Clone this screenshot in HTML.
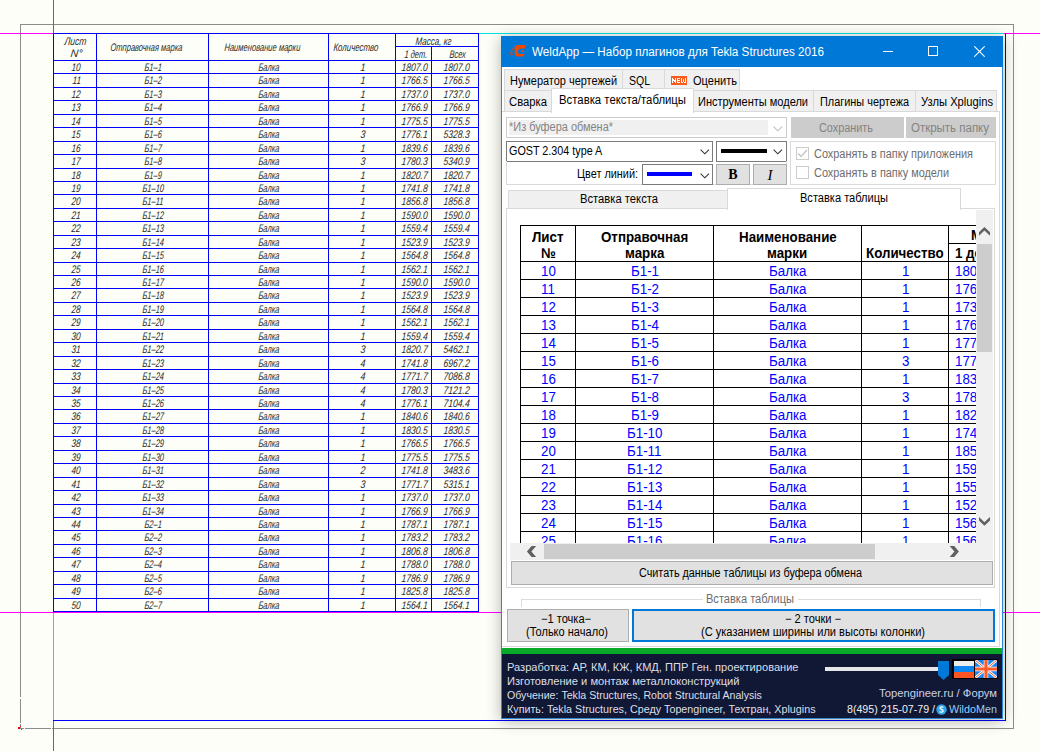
<!DOCTYPE html>
<html><head><meta charset="utf-8">
<style>
*{margin:0;padding:0;box-sizing:border-box}
html,body{width:1040px;height:751px;overflow:hidden;background:#fdfef7}
.a{position:absolute}
.g{position:absolute;line-height:11px;color:#2a2a2a;white-space:nowrap}
.w{position:absolute;line-height:15px;color:#000;white-space:nowrap}
.t{position:absolute;line-height:14px;color:#000;white-space:nowrap}
</style></head><body>
<div class="a" style="left:20px;top:24px;width:994px;height:1px;background:#8c8c8c;"></div>
<div class="a" style="left:20px;top:24px;width:1px;height:705px;background:#8c8c8c;"></div>
<div class="a" style="left:20px;top:728px;width:994px;height:1px;background:#8c8c8c;"></div>
<div class="a" style="left:1013px;top:24px;width:1px;height:705px;background:#8c8c8c;"></div>
<div class="a" style="left:53px;top:0px;width:1px;height:33px;background:#ff00ff;"></div>
<div class="a" style="left:0px;top:33px;width:53px;height:1px;background:#ff00ff;"></div>
<div class="a" style="left:0px;top:612px;width:53px;height:1px;background:#ff00ff;"></div>
<div class="a" style="left:479px;top:33px;width:562px;height:1px;background:#00e5e5;"></div>
<div class="a" style="left:1004px;top:33px;width:37px;height:1px;background:#ff00ff;"></div>
<div class="a" style="left:53px;top:612px;width:988px;height:1px;background:#ff00ff;"></div>
<div class="a" style="left:53px;top:613px;width:1px;height:107px;background:#00e5e5;"></div>
<div class="a" style="left:53px;top:721px;width:1px;height:31px;background:#ff00ff;"></div>
<div class="a" style="left:53px;top:720px;width:953px;height:1px;background:#0000ff;"></div>
<div class="a" style="left:1005px;top:33px;width:1px;height:688px;background:#0000ff;"></div>
<div class="a" style="left:20px;top:697px;width:1px;height:2px;background:#fdfef7;"></div>
<div class="a" style="left:20px;top:723px;width:1px;height:1px;background:#fdfef7;"></div>
<div class="a" style="left:24px;top:728px;width:1px;height:1px;background:#fdfef7;"></div>
<div class="a" style="left:51px;top:728px;width:1px;height:1px;background:#fdfef7;"></div>
<div class="a" style="left:18px;top:727px;width:2px;height:2px;background:#ff0000;"></div>
<div class="a" style="left:20px;top:726px;width:1px;height:1px;background:#ff0000;"></div>
<div class="a" style="left:21px;top:729px;width:1px;height:1px;background:#ff0000;"></div>
<div class="a" style="left:53px;top:33px;width:426px;height:1px;background:#0000ff;"></div>
<div class="a" style="left:395px;top:46px;width:84px;height:1px;background:#0000ff;"></div>
<div class="a" style="left:53px;top:60px;width:426px;height:1px;background:#0000ff;"></div>
<div class="a" style="left:53px;top:73px;width:426px;height:1px;background:#0000ff;"></div>
<div class="a" style="left:53px;top:87px;width:426px;height:1px;background:#0000ff;"></div>
<div class="a" style="left:53px;top:100px;width:426px;height:1px;background:#0000ff;"></div>
<div class="a" style="left:53px;top:114px;width:426px;height:1px;background:#0000ff;"></div>
<div class="a" style="left:53px;top:127px;width:426px;height:1px;background:#0000ff;"></div>
<div class="a" style="left:53px;top:141px;width:426px;height:1px;background:#0000ff;"></div>
<div class="a" style="left:53px;top:154px;width:426px;height:1px;background:#0000ff;"></div>
<div class="a" style="left:53px;top:168px;width:426px;height:1px;background:#0000ff;"></div>
<div class="a" style="left:53px;top:181px;width:426px;height:1px;background:#0000ff;"></div>
<div class="a" style="left:53px;top:194px;width:426px;height:1px;background:#0000ff;"></div>
<div class="a" style="left:53px;top:208px;width:426px;height:1px;background:#0000ff;"></div>
<div class="a" style="left:53px;top:221px;width:426px;height:1px;background:#0000ff;"></div>
<div class="a" style="left:53px;top:235px;width:426px;height:1px;background:#0000ff;"></div>
<div class="a" style="left:53px;top:248px;width:426px;height:1px;background:#0000ff;"></div>
<div class="a" style="left:53px;top:262px;width:426px;height:1px;background:#0000ff;"></div>
<div class="a" style="left:53px;top:275px;width:426px;height:1px;background:#0000ff;"></div>
<div class="a" style="left:53px;top:288px;width:426px;height:1px;background:#0000ff;"></div>
<div class="a" style="left:53px;top:302px;width:426px;height:1px;background:#0000ff;"></div>
<div class="a" style="left:53px;top:315px;width:426px;height:1px;background:#0000ff;"></div>
<div class="a" style="left:53px;top:329px;width:426px;height:1px;background:#0000ff;"></div>
<div class="a" style="left:53px;top:342px;width:426px;height:1px;background:#0000ff;"></div>
<div class="a" style="left:53px;top:356px;width:426px;height:1px;background:#0000ff;"></div>
<div class="a" style="left:53px;top:369px;width:426px;height:1px;background:#0000ff;"></div>
<div class="a" style="left:53px;top:383px;width:426px;height:1px;background:#0000ff;"></div>
<div class="a" style="left:53px;top:396px;width:426px;height:1px;background:#0000ff;"></div>
<div class="a" style="left:53px;top:409px;width:426px;height:1px;background:#0000ff;"></div>
<div class="a" style="left:53px;top:423px;width:426px;height:1px;background:#0000ff;"></div>
<div class="a" style="left:53px;top:436px;width:426px;height:1px;background:#0000ff;"></div>
<div class="a" style="left:53px;top:450px;width:426px;height:1px;background:#0000ff;"></div>
<div class="a" style="left:53px;top:463px;width:426px;height:1px;background:#0000ff;"></div>
<div class="a" style="left:53px;top:477px;width:426px;height:1px;background:#0000ff;"></div>
<div class="a" style="left:53px;top:490px;width:426px;height:1px;background:#0000ff;"></div>
<div class="a" style="left:53px;top:504px;width:426px;height:1px;background:#0000ff;"></div>
<div class="a" style="left:53px;top:517px;width:426px;height:1px;background:#0000ff;"></div>
<div class="a" style="left:53px;top:530px;width:426px;height:1px;background:#0000ff;"></div>
<div class="a" style="left:53px;top:544px;width:426px;height:1px;background:#0000ff;"></div>
<div class="a" style="left:53px;top:557px;width:426px;height:1px;background:#0000ff;"></div>
<div class="a" style="left:53px;top:571px;width:426px;height:1px;background:#0000ff;"></div>
<div class="a" style="left:53px;top:584px;width:426px;height:1px;background:#0000ff;"></div>
<div class="a" style="left:53px;top:598px;width:426px;height:1px;background:#0000ff;"></div>
<div class="a" style="left:53px;top:611px;width:426px;height:1px;background:#0000ff;"></div>
<div class="a" style="left:53px;top:33px;width:1px;height:579px;background:#0000ff;"></div>
<div class="a" style="left:96px;top:33px;width:1px;height:579px;background:#0000ff;"></div>
<div class="a" style="left:208px;top:33px;width:1px;height:579px;background:#0000ff;"></div>
<div class="a" style="left:328px;top:33px;width:1px;height:579px;background:#0000ff;"></div>
<div class="a" style="left:395px;top:33px;width:1px;height:579px;background:#0000ff;"></div>
<div class="a" style="left:431px;top:46px;width:1px;height:566px;background:#0000ff;"></div>
<div class="a" style="left:478px;top:33px;width:1px;height:579px;background:#0000ff;"></div>
<div class="g" style="left:64px;top:35px;font:italic 11px 'Liberation Sans';transform:scaleX(0.7768) skewX(-6deg);transform-origin:0 100%;">Лист</div>
<div class="g" style="left:70px;top:47px;font:italic 11px 'Liberation Sans';transform:scaleX(0.9722) skewX(-6deg);transform-origin:0 100%;">N°</div>
<div class="g" style="left:110px;top:41px;font:italic 11px 'Liberation Sans';transform:scaleX(0.6856) skewX(-6deg);transform-origin:0 100%;">Отправочная марка</div>
<div class="g" style="left:224px;top:41px;font:italic 11px 'Liberation Sans';transform:scaleX(0.6905) skewX(-6deg);transform-origin:0 100%;">Наименование марки</div>
<div class="g" style="left:333px;top:41px;font:italic 11px 'Liberation Sans';transform:scaleX(0.7183) skewX(-6deg);transform-origin:0 100%;">Количество</div>
<div class="g" style="left:415px;top:34.5px;font:italic 11px 'Liberation Sans';transform:scaleX(0.7309) skewX(-6deg);transform-origin:0 100%;">Масса, кг</div>
<div class="g" style="left:404.08px;top:47.5px;font:italic 11px 'Liberation Sans';transform:scaleX(0.6850) skewX(-6deg);transform-origin:0 100%;">1 дет.</div>
<div class="g" style="left:448.79px;top:47.5px;font:italic 11px 'Liberation Sans';transform:scaleX(0.6850) skewX(-6deg);transform-origin:0 100%;">Всех</div>
<div class="g" style="left:71.41px;top:61px;font:italic 11px 'Liberation Sans';transform:scaleX(0.7500) skewX(-6deg);transform-origin:0 100%;">10</div>
<div class="g" style="left:144.26px;top:61px;font:italic 11px 'Liberation Sans';transform:scaleX(0.6850) skewX(-6deg);transform-origin:0 100%;">Б1–1</div>
<div class="g" style="left:258.0px;top:61px;font:italic 11px 'Liberation Sans';transform:scaleX(0.6850) skewX(-6deg);transform-origin:0 100%;">Балка</div>
<div class="g" style="left:359.55px;top:61px;font:italic 11px 'Liberation Sans';transform:scaleX(0.8000) skewX(-6deg);transform-origin:0 100%;">1</div>
<div class="g" style="left:400.88px;top:61px;font:italic 11px 'Liberation Sans';transform:scaleX(0.7800) skewX(-6deg);transform-origin:0 100%;">1807.0</div>
<div class="g" style="left:443.18px;top:61px;font:italic 11px 'Liberation Sans';transform:scaleX(0.7800) skewX(-6deg);transform-origin:0 100%;">1807.0</div>
<div class="g" style="left:71.72px;top:74px;font:italic 11px 'Liberation Sans';transform:scaleX(0.7500) skewX(-6deg);transform-origin:0 100%;">11</div>
<div class="g" style="left:144.26px;top:74px;font:italic 11px 'Liberation Sans';transform:scaleX(0.6850) skewX(-6deg);transform-origin:0 100%;">Б1–2</div>
<div class="g" style="left:258.0px;top:74px;font:italic 11px 'Liberation Sans';transform:scaleX(0.6850) skewX(-6deg);transform-origin:0 100%;">Балка</div>
<div class="g" style="left:359.55px;top:74px;font:italic 11px 'Liberation Sans';transform:scaleX(0.8000) skewX(-6deg);transform-origin:0 100%;">1</div>
<div class="g" style="left:400.88px;top:74px;font:italic 11px 'Liberation Sans';transform:scaleX(0.7800) skewX(-6deg);transform-origin:0 100%;">1766.5</div>
<div class="g" style="left:443.18px;top:74px;font:italic 11px 'Liberation Sans';transform:scaleX(0.7800) skewX(-6deg);transform-origin:0 100%;">1766.5</div>
<div class="g" style="left:71.41px;top:88px;font:italic 11px 'Liberation Sans';transform:scaleX(0.7500) skewX(-6deg);transform-origin:0 100%;">12</div>
<div class="g" style="left:144.26px;top:88px;font:italic 11px 'Liberation Sans';transform:scaleX(0.6850) skewX(-6deg);transform-origin:0 100%;">Б1–3</div>
<div class="g" style="left:258.0px;top:88px;font:italic 11px 'Liberation Sans';transform:scaleX(0.6850) skewX(-6deg);transform-origin:0 100%;">Балка</div>
<div class="g" style="left:359.55px;top:88px;font:italic 11px 'Liberation Sans';transform:scaleX(0.8000) skewX(-6deg);transform-origin:0 100%;">1</div>
<div class="g" style="left:400.88px;top:88px;font:italic 11px 'Liberation Sans';transform:scaleX(0.7800) skewX(-6deg);transform-origin:0 100%;">1737.0</div>
<div class="g" style="left:443.18px;top:88px;font:italic 11px 'Liberation Sans';transform:scaleX(0.7800) skewX(-6deg);transform-origin:0 100%;">1737.0</div>
<div class="g" style="left:71.41px;top:101px;font:italic 11px 'Liberation Sans';transform:scaleX(0.7500) skewX(-6deg);transform-origin:0 100%;">13</div>
<div class="g" style="left:144.26px;top:101px;font:italic 11px 'Liberation Sans';transform:scaleX(0.6850) skewX(-6deg);transform-origin:0 100%;">Б1–4</div>
<div class="g" style="left:258.0px;top:101px;font:italic 11px 'Liberation Sans';transform:scaleX(0.6850) skewX(-6deg);transform-origin:0 100%;">Балка</div>
<div class="g" style="left:359.55px;top:101px;font:italic 11px 'Liberation Sans';transform:scaleX(0.8000) skewX(-6deg);transform-origin:0 100%;">1</div>
<div class="g" style="left:400.88px;top:101px;font:italic 11px 'Liberation Sans';transform:scaleX(0.7800) skewX(-6deg);transform-origin:0 100%;">1766.9</div>
<div class="g" style="left:443.18px;top:101px;font:italic 11px 'Liberation Sans';transform:scaleX(0.7800) skewX(-6deg);transform-origin:0 100%;">1766.9</div>
<div class="g" style="left:71.41px;top:115px;font:italic 11px 'Liberation Sans';transform:scaleX(0.7500) skewX(-6deg);transform-origin:0 100%;">14</div>
<div class="g" style="left:144.26px;top:115px;font:italic 11px 'Liberation Sans';transform:scaleX(0.6850) skewX(-6deg);transform-origin:0 100%;">Б1–5</div>
<div class="g" style="left:258.0px;top:115px;font:italic 11px 'Liberation Sans';transform:scaleX(0.6850) skewX(-6deg);transform-origin:0 100%;">Балка</div>
<div class="g" style="left:359.55px;top:115px;font:italic 11px 'Liberation Sans';transform:scaleX(0.8000) skewX(-6deg);transform-origin:0 100%;">1</div>
<div class="g" style="left:400.88px;top:115px;font:italic 11px 'Liberation Sans';transform:scaleX(0.7800) skewX(-6deg);transform-origin:0 100%;">1775.5</div>
<div class="g" style="left:443.18px;top:115px;font:italic 11px 'Liberation Sans';transform:scaleX(0.7800) skewX(-6deg);transform-origin:0 100%;">1775.5</div>
<div class="g" style="left:71.41px;top:128px;font:italic 11px 'Liberation Sans';transform:scaleX(0.7500) skewX(-6deg);transform-origin:0 100%;">15</div>
<div class="g" style="left:144.26px;top:128px;font:italic 11px 'Liberation Sans';transform:scaleX(0.6850) skewX(-6deg);transform-origin:0 100%;">Б1–6</div>
<div class="g" style="left:258.0px;top:128px;font:italic 11px 'Liberation Sans';transform:scaleX(0.6850) skewX(-6deg);transform-origin:0 100%;">Балка</div>
<div class="g" style="left:359.55px;top:128px;font:italic 11px 'Liberation Sans';transform:scaleX(0.8000) skewX(-6deg);transform-origin:0 100%;">3</div>
<div class="g" style="left:400.88px;top:128px;font:italic 11px 'Liberation Sans';transform:scaleX(0.7800) skewX(-6deg);transform-origin:0 100%;">1776.1</div>
<div class="g" style="left:443.18px;top:128px;font:italic 11px 'Liberation Sans';transform:scaleX(0.7800) skewX(-6deg);transform-origin:0 100%;">5328.3</div>
<div class="g" style="left:71.41px;top:142px;font:italic 11px 'Liberation Sans';transform:scaleX(0.7500) skewX(-6deg);transform-origin:0 100%;">16</div>
<div class="g" style="left:144.26px;top:142px;font:italic 11px 'Liberation Sans';transform:scaleX(0.6850) skewX(-6deg);transform-origin:0 100%;">Б1–7</div>
<div class="g" style="left:258.0px;top:142px;font:italic 11px 'Liberation Sans';transform:scaleX(0.6850) skewX(-6deg);transform-origin:0 100%;">Балка</div>
<div class="g" style="left:359.55px;top:142px;font:italic 11px 'Liberation Sans';transform:scaleX(0.8000) skewX(-6deg);transform-origin:0 100%;">1</div>
<div class="g" style="left:400.88px;top:142px;font:italic 11px 'Liberation Sans';transform:scaleX(0.7800) skewX(-6deg);transform-origin:0 100%;">1839.6</div>
<div class="g" style="left:443.18px;top:142px;font:italic 11px 'Liberation Sans';transform:scaleX(0.7800) skewX(-6deg);transform-origin:0 100%;">1839.6</div>
<div class="g" style="left:71.41px;top:155px;font:italic 11px 'Liberation Sans';transform:scaleX(0.7500) skewX(-6deg);transform-origin:0 100%;">17</div>
<div class="g" style="left:144.26px;top:155px;font:italic 11px 'Liberation Sans';transform:scaleX(0.6850) skewX(-6deg);transform-origin:0 100%;">Б1–8</div>
<div class="g" style="left:258.0px;top:155px;font:italic 11px 'Liberation Sans';transform:scaleX(0.6850) skewX(-6deg);transform-origin:0 100%;">Балка</div>
<div class="g" style="left:359.55px;top:155px;font:italic 11px 'Liberation Sans';transform:scaleX(0.8000) skewX(-6deg);transform-origin:0 100%;">3</div>
<div class="g" style="left:400.88px;top:155px;font:italic 11px 'Liberation Sans';transform:scaleX(0.7800) skewX(-6deg);transform-origin:0 100%;">1780.3</div>
<div class="g" style="left:443.18px;top:155px;font:italic 11px 'Liberation Sans';transform:scaleX(0.7800) skewX(-6deg);transform-origin:0 100%;">5340.9</div>
<div class="g" style="left:71.41px;top:169px;font:italic 11px 'Liberation Sans';transform:scaleX(0.7500) skewX(-6deg);transform-origin:0 100%;">18</div>
<div class="g" style="left:144.26px;top:169px;font:italic 11px 'Liberation Sans';transform:scaleX(0.6850) skewX(-6deg);transform-origin:0 100%;">Б1–9</div>
<div class="g" style="left:258.0px;top:169px;font:italic 11px 'Liberation Sans';transform:scaleX(0.6850) skewX(-6deg);transform-origin:0 100%;">Балка</div>
<div class="g" style="left:359.55px;top:169px;font:italic 11px 'Liberation Sans';transform:scaleX(0.8000) skewX(-6deg);transform-origin:0 100%;">1</div>
<div class="g" style="left:400.88px;top:169px;font:italic 11px 'Liberation Sans';transform:scaleX(0.7800) skewX(-6deg);transform-origin:0 100%;">1820.7</div>
<div class="g" style="left:443.18px;top:169px;font:italic 11px 'Liberation Sans';transform:scaleX(0.7800) skewX(-6deg);transform-origin:0 100%;">1820.7</div>
<div class="g" style="left:71.41px;top:182px;font:italic 11px 'Liberation Sans';transform:scaleX(0.7500) skewX(-6deg);transform-origin:0 100%;">19</div>
<div class="g" style="left:142.17px;top:182px;font:italic 11px 'Liberation Sans';transform:scaleX(0.6850) skewX(-6deg);transform-origin:0 100%;">Б1–10</div>
<div class="g" style="left:258.0px;top:182px;font:italic 11px 'Liberation Sans';transform:scaleX(0.6850) skewX(-6deg);transform-origin:0 100%;">Балка</div>
<div class="g" style="left:359.55px;top:182px;font:italic 11px 'Liberation Sans';transform:scaleX(0.8000) skewX(-6deg);transform-origin:0 100%;">1</div>
<div class="g" style="left:400.88px;top:182px;font:italic 11px 'Liberation Sans';transform:scaleX(0.7800) skewX(-6deg);transform-origin:0 100%;">1741.8</div>
<div class="g" style="left:443.18px;top:182px;font:italic 11px 'Liberation Sans';transform:scaleX(0.7800) skewX(-6deg);transform-origin:0 100%;">1741.8</div>
<div class="g" style="left:71.41px;top:195px;font:italic 11px 'Liberation Sans';transform:scaleX(0.7500) skewX(-6deg);transform-origin:0 100%;">20</div>
<div class="g" style="left:142.45px;top:195px;font:italic 11px 'Liberation Sans';transform:scaleX(0.6850) skewX(-6deg);transform-origin:0 100%;">Б1–11</div>
<div class="g" style="left:258.0px;top:195px;font:italic 11px 'Liberation Sans';transform:scaleX(0.6850) skewX(-6deg);transform-origin:0 100%;">Балка</div>
<div class="g" style="left:359.55px;top:195px;font:italic 11px 'Liberation Sans';transform:scaleX(0.8000) skewX(-6deg);transform-origin:0 100%;">1</div>
<div class="g" style="left:400.88px;top:195px;font:italic 11px 'Liberation Sans';transform:scaleX(0.7800) skewX(-6deg);transform-origin:0 100%;">1856.8</div>
<div class="g" style="left:443.18px;top:195px;font:italic 11px 'Liberation Sans';transform:scaleX(0.7800) skewX(-6deg);transform-origin:0 100%;">1856.8</div>
<div class="g" style="left:71.41px;top:209px;font:italic 11px 'Liberation Sans';transform:scaleX(0.7500) skewX(-6deg);transform-origin:0 100%;">21</div>
<div class="g" style="left:142.17px;top:209px;font:italic 11px 'Liberation Sans';transform:scaleX(0.6850) skewX(-6deg);transform-origin:0 100%;">Б1–12</div>
<div class="g" style="left:258.0px;top:209px;font:italic 11px 'Liberation Sans';transform:scaleX(0.6850) skewX(-6deg);transform-origin:0 100%;">Балка</div>
<div class="g" style="left:359.55px;top:209px;font:italic 11px 'Liberation Sans';transform:scaleX(0.8000) skewX(-6deg);transform-origin:0 100%;">1</div>
<div class="g" style="left:400.88px;top:209px;font:italic 11px 'Liberation Sans';transform:scaleX(0.7800) skewX(-6deg);transform-origin:0 100%;">1590.0</div>
<div class="g" style="left:443.18px;top:209px;font:italic 11px 'Liberation Sans';transform:scaleX(0.7800) skewX(-6deg);transform-origin:0 100%;">1590.0</div>
<div class="g" style="left:71.41px;top:222px;font:italic 11px 'Liberation Sans';transform:scaleX(0.7500) skewX(-6deg);transform-origin:0 100%;">22</div>
<div class="g" style="left:142.17px;top:222px;font:italic 11px 'Liberation Sans';transform:scaleX(0.6850) skewX(-6deg);transform-origin:0 100%;">Б1–13</div>
<div class="g" style="left:258.0px;top:222px;font:italic 11px 'Liberation Sans';transform:scaleX(0.6850) skewX(-6deg);transform-origin:0 100%;">Балка</div>
<div class="g" style="left:359.55px;top:222px;font:italic 11px 'Liberation Sans';transform:scaleX(0.8000) skewX(-6deg);transform-origin:0 100%;">1</div>
<div class="g" style="left:400.88px;top:222px;font:italic 11px 'Liberation Sans';transform:scaleX(0.7800) skewX(-6deg);transform-origin:0 100%;">1559.4</div>
<div class="g" style="left:443.18px;top:222px;font:italic 11px 'Liberation Sans';transform:scaleX(0.7800) skewX(-6deg);transform-origin:0 100%;">1559.4</div>
<div class="g" style="left:71.41px;top:236px;font:italic 11px 'Liberation Sans';transform:scaleX(0.7500) skewX(-6deg);transform-origin:0 100%;">23</div>
<div class="g" style="left:142.17px;top:236px;font:italic 11px 'Liberation Sans';transform:scaleX(0.6850) skewX(-6deg);transform-origin:0 100%;">Б1–14</div>
<div class="g" style="left:258.0px;top:236px;font:italic 11px 'Liberation Sans';transform:scaleX(0.6850) skewX(-6deg);transform-origin:0 100%;">Балка</div>
<div class="g" style="left:359.55px;top:236px;font:italic 11px 'Liberation Sans';transform:scaleX(0.8000) skewX(-6deg);transform-origin:0 100%;">1</div>
<div class="g" style="left:400.88px;top:236px;font:italic 11px 'Liberation Sans';transform:scaleX(0.7800) skewX(-6deg);transform-origin:0 100%;">1523.9</div>
<div class="g" style="left:443.18px;top:236px;font:italic 11px 'Liberation Sans';transform:scaleX(0.7800) skewX(-6deg);transform-origin:0 100%;">1523.9</div>
<div class="g" style="left:71.41px;top:249px;font:italic 11px 'Liberation Sans';transform:scaleX(0.7500) skewX(-6deg);transform-origin:0 100%;">24</div>
<div class="g" style="left:142.17px;top:249px;font:italic 11px 'Liberation Sans';transform:scaleX(0.6850) skewX(-6deg);transform-origin:0 100%;">Б1–15</div>
<div class="g" style="left:258.0px;top:249px;font:italic 11px 'Liberation Sans';transform:scaleX(0.6850) skewX(-6deg);transform-origin:0 100%;">Балка</div>
<div class="g" style="left:359.55px;top:249px;font:italic 11px 'Liberation Sans';transform:scaleX(0.8000) skewX(-6deg);transform-origin:0 100%;">1</div>
<div class="g" style="left:400.88px;top:249px;font:italic 11px 'Liberation Sans';transform:scaleX(0.7800) skewX(-6deg);transform-origin:0 100%;">1564.8</div>
<div class="g" style="left:443.18px;top:249px;font:italic 11px 'Liberation Sans';transform:scaleX(0.7800) skewX(-6deg);transform-origin:0 100%;">1564.8</div>
<div class="g" style="left:71.41px;top:263px;font:italic 11px 'Liberation Sans';transform:scaleX(0.7500) skewX(-6deg);transform-origin:0 100%;">25</div>
<div class="g" style="left:142.17px;top:263px;font:italic 11px 'Liberation Sans';transform:scaleX(0.6850) skewX(-6deg);transform-origin:0 100%;">Б1–16</div>
<div class="g" style="left:258.0px;top:263px;font:italic 11px 'Liberation Sans';transform:scaleX(0.6850) skewX(-6deg);transform-origin:0 100%;">Балка</div>
<div class="g" style="left:359.55px;top:263px;font:italic 11px 'Liberation Sans';transform:scaleX(0.8000) skewX(-6deg);transform-origin:0 100%;">1</div>
<div class="g" style="left:400.88px;top:263px;font:italic 11px 'Liberation Sans';transform:scaleX(0.7800) skewX(-6deg);transform-origin:0 100%;">1562.1</div>
<div class="g" style="left:443.18px;top:263px;font:italic 11px 'Liberation Sans';transform:scaleX(0.7800) skewX(-6deg);transform-origin:0 100%;">1562.1</div>
<div class="g" style="left:71.41px;top:276px;font:italic 11px 'Liberation Sans';transform:scaleX(0.7500) skewX(-6deg);transform-origin:0 100%;">26</div>
<div class="g" style="left:142.17px;top:276px;font:italic 11px 'Liberation Sans';transform:scaleX(0.6850) skewX(-6deg);transform-origin:0 100%;">Б1–17</div>
<div class="g" style="left:258.0px;top:276px;font:italic 11px 'Liberation Sans';transform:scaleX(0.6850) skewX(-6deg);transform-origin:0 100%;">Балка</div>
<div class="g" style="left:359.55px;top:276px;font:italic 11px 'Liberation Sans';transform:scaleX(0.8000) skewX(-6deg);transform-origin:0 100%;">1</div>
<div class="g" style="left:400.88px;top:276px;font:italic 11px 'Liberation Sans';transform:scaleX(0.7800) skewX(-6deg);transform-origin:0 100%;">1590.0</div>
<div class="g" style="left:443.18px;top:276px;font:italic 11px 'Liberation Sans';transform:scaleX(0.7800) skewX(-6deg);transform-origin:0 100%;">1590.0</div>
<div class="g" style="left:71.41px;top:289px;font:italic 11px 'Liberation Sans';transform:scaleX(0.7500) skewX(-6deg);transform-origin:0 100%;">27</div>
<div class="g" style="left:142.17px;top:289px;font:italic 11px 'Liberation Sans';transform:scaleX(0.6850) skewX(-6deg);transform-origin:0 100%;">Б1–18</div>
<div class="g" style="left:258.0px;top:289px;font:italic 11px 'Liberation Sans';transform:scaleX(0.6850) skewX(-6deg);transform-origin:0 100%;">Балка</div>
<div class="g" style="left:359.55px;top:289px;font:italic 11px 'Liberation Sans';transform:scaleX(0.8000) skewX(-6deg);transform-origin:0 100%;">1</div>
<div class="g" style="left:400.88px;top:289px;font:italic 11px 'Liberation Sans';transform:scaleX(0.7800) skewX(-6deg);transform-origin:0 100%;">1523.9</div>
<div class="g" style="left:443.18px;top:289px;font:italic 11px 'Liberation Sans';transform:scaleX(0.7800) skewX(-6deg);transform-origin:0 100%;">1523.9</div>
<div class="g" style="left:71.41px;top:303px;font:italic 11px 'Liberation Sans';transform:scaleX(0.7500) skewX(-6deg);transform-origin:0 100%;">28</div>
<div class="g" style="left:142.17px;top:303px;font:italic 11px 'Liberation Sans';transform:scaleX(0.6850) skewX(-6deg);transform-origin:0 100%;">Б1–19</div>
<div class="g" style="left:258.0px;top:303px;font:italic 11px 'Liberation Sans';transform:scaleX(0.6850) skewX(-6deg);transform-origin:0 100%;">Балка</div>
<div class="g" style="left:359.55px;top:303px;font:italic 11px 'Liberation Sans';transform:scaleX(0.8000) skewX(-6deg);transform-origin:0 100%;">1</div>
<div class="g" style="left:400.88px;top:303px;font:italic 11px 'Liberation Sans';transform:scaleX(0.7800) skewX(-6deg);transform-origin:0 100%;">1564.8</div>
<div class="g" style="left:443.18px;top:303px;font:italic 11px 'Liberation Sans';transform:scaleX(0.7800) skewX(-6deg);transform-origin:0 100%;">1564.8</div>
<div class="g" style="left:71.41px;top:316px;font:italic 11px 'Liberation Sans';transform:scaleX(0.7500) skewX(-6deg);transform-origin:0 100%;">29</div>
<div class="g" style="left:142.17px;top:316px;font:italic 11px 'Liberation Sans';transform:scaleX(0.6850) skewX(-6deg);transform-origin:0 100%;">Б1–20</div>
<div class="g" style="left:258.0px;top:316px;font:italic 11px 'Liberation Sans';transform:scaleX(0.6850) skewX(-6deg);transform-origin:0 100%;">Балка</div>
<div class="g" style="left:359.55px;top:316px;font:italic 11px 'Liberation Sans';transform:scaleX(0.8000) skewX(-6deg);transform-origin:0 100%;">1</div>
<div class="g" style="left:400.88px;top:316px;font:italic 11px 'Liberation Sans';transform:scaleX(0.7800) skewX(-6deg);transform-origin:0 100%;">1562.1</div>
<div class="g" style="left:443.18px;top:316px;font:italic 11px 'Liberation Sans';transform:scaleX(0.7800) skewX(-6deg);transform-origin:0 100%;">1562.1</div>
<div class="g" style="left:71.41px;top:330px;font:italic 11px 'Liberation Sans';transform:scaleX(0.7500) skewX(-6deg);transform-origin:0 100%;">30</div>
<div class="g" style="left:142.17px;top:330px;font:italic 11px 'Liberation Sans';transform:scaleX(0.6850) skewX(-6deg);transform-origin:0 100%;">Б1–21</div>
<div class="g" style="left:258.0px;top:330px;font:italic 11px 'Liberation Sans';transform:scaleX(0.6850) skewX(-6deg);transform-origin:0 100%;">Балка</div>
<div class="g" style="left:359.55px;top:330px;font:italic 11px 'Liberation Sans';transform:scaleX(0.8000) skewX(-6deg);transform-origin:0 100%;">1</div>
<div class="g" style="left:400.88px;top:330px;font:italic 11px 'Liberation Sans';transform:scaleX(0.7800) skewX(-6deg);transform-origin:0 100%;">1559.4</div>
<div class="g" style="left:443.18px;top:330px;font:italic 11px 'Liberation Sans';transform:scaleX(0.7800) skewX(-6deg);transform-origin:0 100%;">1559.4</div>
<div class="g" style="left:71.41px;top:343px;font:italic 11px 'Liberation Sans';transform:scaleX(0.7500) skewX(-6deg);transform-origin:0 100%;">31</div>
<div class="g" style="left:142.17px;top:343px;font:italic 11px 'Liberation Sans';transform:scaleX(0.6850) skewX(-6deg);transform-origin:0 100%;">Б1–22</div>
<div class="g" style="left:258.0px;top:343px;font:italic 11px 'Liberation Sans';transform:scaleX(0.6850) skewX(-6deg);transform-origin:0 100%;">Балка</div>
<div class="g" style="left:359.55px;top:343px;font:italic 11px 'Liberation Sans';transform:scaleX(0.8000) skewX(-6deg);transform-origin:0 100%;">3</div>
<div class="g" style="left:400.88px;top:343px;font:italic 11px 'Liberation Sans';transform:scaleX(0.7800) skewX(-6deg);transform-origin:0 100%;">1820.7</div>
<div class="g" style="left:443.18px;top:343px;font:italic 11px 'Liberation Sans';transform:scaleX(0.7800) skewX(-6deg);transform-origin:0 100%;">5462.1</div>
<div class="g" style="left:71.41px;top:357px;font:italic 11px 'Liberation Sans';transform:scaleX(0.7500) skewX(-6deg);transform-origin:0 100%;">32</div>
<div class="g" style="left:142.17px;top:357px;font:italic 11px 'Liberation Sans';transform:scaleX(0.6850) skewX(-6deg);transform-origin:0 100%;">Б1–23</div>
<div class="g" style="left:258.0px;top:357px;font:italic 11px 'Liberation Sans';transform:scaleX(0.6850) skewX(-6deg);transform-origin:0 100%;">Балка</div>
<div class="g" style="left:359.55px;top:357px;font:italic 11px 'Liberation Sans';transform:scaleX(0.8000) skewX(-6deg);transform-origin:0 100%;">4</div>
<div class="g" style="left:400.88px;top:357px;font:italic 11px 'Liberation Sans';transform:scaleX(0.7800) skewX(-6deg);transform-origin:0 100%;">1741.8</div>
<div class="g" style="left:443.18px;top:357px;font:italic 11px 'Liberation Sans';transform:scaleX(0.7800) skewX(-6deg);transform-origin:0 100%;">6967.2</div>
<div class="g" style="left:71.41px;top:370px;font:italic 11px 'Liberation Sans';transform:scaleX(0.7500) skewX(-6deg);transform-origin:0 100%;">33</div>
<div class="g" style="left:142.17px;top:370px;font:italic 11px 'Liberation Sans';transform:scaleX(0.6850) skewX(-6deg);transform-origin:0 100%;">Б1–24</div>
<div class="g" style="left:258.0px;top:370px;font:italic 11px 'Liberation Sans';transform:scaleX(0.6850) skewX(-6deg);transform-origin:0 100%;">Балка</div>
<div class="g" style="left:359.55px;top:370px;font:italic 11px 'Liberation Sans';transform:scaleX(0.8000) skewX(-6deg);transform-origin:0 100%;">4</div>
<div class="g" style="left:400.88px;top:370px;font:italic 11px 'Liberation Sans';transform:scaleX(0.7800) skewX(-6deg);transform-origin:0 100%;">1771.7</div>
<div class="g" style="left:443.18px;top:370px;font:italic 11px 'Liberation Sans';transform:scaleX(0.7800) skewX(-6deg);transform-origin:0 100%;">7086.8</div>
<div class="g" style="left:71.41px;top:384px;font:italic 11px 'Liberation Sans';transform:scaleX(0.7500) skewX(-6deg);transform-origin:0 100%;">34</div>
<div class="g" style="left:142.17px;top:384px;font:italic 11px 'Liberation Sans';transform:scaleX(0.6850) skewX(-6deg);transform-origin:0 100%;">Б1–25</div>
<div class="g" style="left:258.0px;top:384px;font:italic 11px 'Liberation Sans';transform:scaleX(0.6850) skewX(-6deg);transform-origin:0 100%;">Балка</div>
<div class="g" style="left:359.55px;top:384px;font:italic 11px 'Liberation Sans';transform:scaleX(0.8000) skewX(-6deg);transform-origin:0 100%;">4</div>
<div class="g" style="left:400.88px;top:384px;font:italic 11px 'Liberation Sans';transform:scaleX(0.7800) skewX(-6deg);transform-origin:0 100%;">1780.3</div>
<div class="g" style="left:443.18px;top:384px;font:italic 11px 'Liberation Sans';transform:scaleX(0.7800) skewX(-6deg);transform-origin:0 100%;">7121.2</div>
<div class="g" style="left:71.41px;top:397px;font:italic 11px 'Liberation Sans';transform:scaleX(0.7500) skewX(-6deg);transform-origin:0 100%;">35</div>
<div class="g" style="left:142.17px;top:397px;font:italic 11px 'Liberation Sans';transform:scaleX(0.6850) skewX(-6deg);transform-origin:0 100%;">Б1–26</div>
<div class="g" style="left:258.0px;top:397px;font:italic 11px 'Liberation Sans';transform:scaleX(0.6850) skewX(-6deg);transform-origin:0 100%;">Балка</div>
<div class="g" style="left:359.55px;top:397px;font:italic 11px 'Liberation Sans';transform:scaleX(0.8000) skewX(-6deg);transform-origin:0 100%;">4</div>
<div class="g" style="left:400.88px;top:397px;font:italic 11px 'Liberation Sans';transform:scaleX(0.7800) skewX(-6deg);transform-origin:0 100%;">1776.1</div>
<div class="g" style="left:443.18px;top:397px;font:italic 11px 'Liberation Sans';transform:scaleX(0.7800) skewX(-6deg);transform-origin:0 100%;">7104.4</div>
<div class="g" style="left:71.41px;top:410px;font:italic 11px 'Liberation Sans';transform:scaleX(0.7500) skewX(-6deg);transform-origin:0 100%;">36</div>
<div class="g" style="left:142.17px;top:410px;font:italic 11px 'Liberation Sans';transform:scaleX(0.6850) skewX(-6deg);transform-origin:0 100%;">Б1–27</div>
<div class="g" style="left:258.0px;top:410px;font:italic 11px 'Liberation Sans';transform:scaleX(0.6850) skewX(-6deg);transform-origin:0 100%;">Балка</div>
<div class="g" style="left:359.55px;top:410px;font:italic 11px 'Liberation Sans';transform:scaleX(0.8000) skewX(-6deg);transform-origin:0 100%;">1</div>
<div class="g" style="left:400.88px;top:410px;font:italic 11px 'Liberation Sans';transform:scaleX(0.7800) skewX(-6deg);transform-origin:0 100%;">1840.6</div>
<div class="g" style="left:443.18px;top:410px;font:italic 11px 'Liberation Sans';transform:scaleX(0.7800) skewX(-6deg);transform-origin:0 100%;">1840.6</div>
<div class="g" style="left:71.41px;top:424px;font:italic 11px 'Liberation Sans';transform:scaleX(0.7500) skewX(-6deg);transform-origin:0 100%;">37</div>
<div class="g" style="left:142.17px;top:424px;font:italic 11px 'Liberation Sans';transform:scaleX(0.6850) skewX(-6deg);transform-origin:0 100%;">Б1–28</div>
<div class="g" style="left:258.0px;top:424px;font:italic 11px 'Liberation Sans';transform:scaleX(0.6850) skewX(-6deg);transform-origin:0 100%;">Балка</div>
<div class="g" style="left:359.55px;top:424px;font:italic 11px 'Liberation Sans';transform:scaleX(0.8000) skewX(-6deg);transform-origin:0 100%;">1</div>
<div class="g" style="left:400.88px;top:424px;font:italic 11px 'Liberation Sans';transform:scaleX(0.7800) skewX(-6deg);transform-origin:0 100%;">1830.5</div>
<div class="g" style="left:443.18px;top:424px;font:italic 11px 'Liberation Sans';transform:scaleX(0.7800) skewX(-6deg);transform-origin:0 100%;">1830.5</div>
<div class="g" style="left:71.41px;top:437px;font:italic 11px 'Liberation Sans';transform:scaleX(0.7500) skewX(-6deg);transform-origin:0 100%;">38</div>
<div class="g" style="left:142.17px;top:437px;font:italic 11px 'Liberation Sans';transform:scaleX(0.6850) skewX(-6deg);transform-origin:0 100%;">Б1–29</div>
<div class="g" style="left:258.0px;top:437px;font:italic 11px 'Liberation Sans';transform:scaleX(0.6850) skewX(-6deg);transform-origin:0 100%;">Балка</div>
<div class="g" style="left:359.55px;top:437px;font:italic 11px 'Liberation Sans';transform:scaleX(0.8000) skewX(-6deg);transform-origin:0 100%;">1</div>
<div class="g" style="left:400.88px;top:437px;font:italic 11px 'Liberation Sans';transform:scaleX(0.7800) skewX(-6deg);transform-origin:0 100%;">1766.5</div>
<div class="g" style="left:443.18px;top:437px;font:italic 11px 'Liberation Sans';transform:scaleX(0.7800) skewX(-6deg);transform-origin:0 100%;">1766.5</div>
<div class="g" style="left:71.41px;top:451px;font:italic 11px 'Liberation Sans';transform:scaleX(0.7500) skewX(-6deg);transform-origin:0 100%;">39</div>
<div class="g" style="left:142.17px;top:451px;font:italic 11px 'Liberation Sans';transform:scaleX(0.6850) skewX(-6deg);transform-origin:0 100%;">Б1–30</div>
<div class="g" style="left:258.0px;top:451px;font:italic 11px 'Liberation Sans';transform:scaleX(0.6850) skewX(-6deg);transform-origin:0 100%;">Балка</div>
<div class="g" style="left:359.55px;top:451px;font:italic 11px 'Liberation Sans';transform:scaleX(0.8000) skewX(-6deg);transform-origin:0 100%;">1</div>
<div class="g" style="left:400.88px;top:451px;font:italic 11px 'Liberation Sans';transform:scaleX(0.7800) skewX(-6deg);transform-origin:0 100%;">1775.5</div>
<div class="g" style="left:443.18px;top:451px;font:italic 11px 'Liberation Sans';transform:scaleX(0.7800) skewX(-6deg);transform-origin:0 100%;">1775.5</div>
<div class="g" style="left:71.41px;top:464px;font:italic 11px 'Liberation Sans';transform:scaleX(0.7500) skewX(-6deg);transform-origin:0 100%;">40</div>
<div class="g" style="left:142.17px;top:464px;font:italic 11px 'Liberation Sans';transform:scaleX(0.6850) skewX(-6deg);transform-origin:0 100%;">Б1–31</div>
<div class="g" style="left:258.0px;top:464px;font:italic 11px 'Liberation Sans';transform:scaleX(0.6850) skewX(-6deg);transform-origin:0 100%;">Балка</div>
<div class="g" style="left:359.55px;top:464px;font:italic 11px 'Liberation Sans';transform:scaleX(0.8000) skewX(-6deg);transform-origin:0 100%;">2</div>
<div class="g" style="left:400.88px;top:464px;font:italic 11px 'Liberation Sans';transform:scaleX(0.7800) skewX(-6deg);transform-origin:0 100%;">1741.8</div>
<div class="g" style="left:443.18px;top:464px;font:italic 11px 'Liberation Sans';transform:scaleX(0.7800) skewX(-6deg);transform-origin:0 100%;">3483.6</div>
<div class="g" style="left:71.41px;top:478px;font:italic 11px 'Liberation Sans';transform:scaleX(0.7500) skewX(-6deg);transform-origin:0 100%;">41</div>
<div class="g" style="left:142.17px;top:478px;font:italic 11px 'Liberation Sans';transform:scaleX(0.6850) skewX(-6deg);transform-origin:0 100%;">Б1–32</div>
<div class="g" style="left:258.0px;top:478px;font:italic 11px 'Liberation Sans';transform:scaleX(0.6850) skewX(-6deg);transform-origin:0 100%;">Балка</div>
<div class="g" style="left:359.55px;top:478px;font:italic 11px 'Liberation Sans';transform:scaleX(0.8000) skewX(-6deg);transform-origin:0 100%;">3</div>
<div class="g" style="left:400.88px;top:478px;font:italic 11px 'Liberation Sans';transform:scaleX(0.7800) skewX(-6deg);transform-origin:0 100%;">1771.7</div>
<div class="g" style="left:443.18px;top:478px;font:italic 11px 'Liberation Sans';transform:scaleX(0.7800) skewX(-6deg);transform-origin:0 100%;">5315.1</div>
<div class="g" style="left:71.41px;top:491px;font:italic 11px 'Liberation Sans';transform:scaleX(0.7500) skewX(-6deg);transform-origin:0 100%;">42</div>
<div class="g" style="left:142.17px;top:491px;font:italic 11px 'Liberation Sans';transform:scaleX(0.6850) skewX(-6deg);transform-origin:0 100%;">Б1–33</div>
<div class="g" style="left:258.0px;top:491px;font:italic 11px 'Liberation Sans';transform:scaleX(0.6850) skewX(-6deg);transform-origin:0 100%;">Балка</div>
<div class="g" style="left:359.55px;top:491px;font:italic 11px 'Liberation Sans';transform:scaleX(0.8000) skewX(-6deg);transform-origin:0 100%;">1</div>
<div class="g" style="left:400.88px;top:491px;font:italic 11px 'Liberation Sans';transform:scaleX(0.7800) skewX(-6deg);transform-origin:0 100%;">1737.0</div>
<div class="g" style="left:443.18px;top:491px;font:italic 11px 'Liberation Sans';transform:scaleX(0.7800) skewX(-6deg);transform-origin:0 100%;">1737.0</div>
<div class="g" style="left:71.41px;top:505px;font:italic 11px 'Liberation Sans';transform:scaleX(0.7500) skewX(-6deg);transform-origin:0 100%;">43</div>
<div class="g" style="left:142.17px;top:505px;font:italic 11px 'Liberation Sans';transform:scaleX(0.6850) skewX(-6deg);transform-origin:0 100%;">Б1–34</div>
<div class="g" style="left:258.0px;top:505px;font:italic 11px 'Liberation Sans';transform:scaleX(0.6850) skewX(-6deg);transform-origin:0 100%;">Балка</div>
<div class="g" style="left:359.55px;top:505px;font:italic 11px 'Liberation Sans';transform:scaleX(0.8000) skewX(-6deg);transform-origin:0 100%;">1</div>
<div class="g" style="left:400.88px;top:505px;font:italic 11px 'Liberation Sans';transform:scaleX(0.7800) skewX(-6deg);transform-origin:0 100%;">1766.9</div>
<div class="g" style="left:443.18px;top:505px;font:italic 11px 'Liberation Sans';transform:scaleX(0.7800) skewX(-6deg);transform-origin:0 100%;">1766.9</div>
<div class="g" style="left:71.41px;top:518px;font:italic 11px 'Liberation Sans';transform:scaleX(0.7500) skewX(-6deg);transform-origin:0 100%;">44</div>
<div class="g" style="left:144.26px;top:518px;font:italic 11px 'Liberation Sans';transform:scaleX(0.6850) skewX(-6deg);transform-origin:0 100%;">Б2–1</div>
<div class="g" style="left:258.0px;top:518px;font:italic 11px 'Liberation Sans';transform:scaleX(0.6850) skewX(-6deg);transform-origin:0 100%;">Балка</div>
<div class="g" style="left:359.55px;top:518px;font:italic 11px 'Liberation Sans';transform:scaleX(0.8000) skewX(-6deg);transform-origin:0 100%;">1</div>
<div class="g" style="left:400.88px;top:518px;font:italic 11px 'Liberation Sans';transform:scaleX(0.7800) skewX(-6deg);transform-origin:0 100%;">1787.1</div>
<div class="g" style="left:443.18px;top:518px;font:italic 11px 'Liberation Sans';transform:scaleX(0.7800) skewX(-6deg);transform-origin:0 100%;">1787.1</div>
<div class="g" style="left:71.41px;top:531px;font:italic 11px 'Liberation Sans';transform:scaleX(0.7500) skewX(-6deg);transform-origin:0 100%;">45</div>
<div class="g" style="left:144.26px;top:531px;font:italic 11px 'Liberation Sans';transform:scaleX(0.6850) skewX(-6deg);transform-origin:0 100%;">Б2–2</div>
<div class="g" style="left:258.0px;top:531px;font:italic 11px 'Liberation Sans';transform:scaleX(0.6850) skewX(-6deg);transform-origin:0 100%;">Балка</div>
<div class="g" style="left:359.55px;top:531px;font:italic 11px 'Liberation Sans';transform:scaleX(0.8000) skewX(-6deg);transform-origin:0 100%;">1</div>
<div class="g" style="left:400.88px;top:531px;font:italic 11px 'Liberation Sans';transform:scaleX(0.7800) skewX(-6deg);transform-origin:0 100%;">1783.2</div>
<div class="g" style="left:443.18px;top:531px;font:italic 11px 'Liberation Sans';transform:scaleX(0.7800) skewX(-6deg);transform-origin:0 100%;">1783.2</div>
<div class="g" style="left:71.41px;top:545px;font:italic 11px 'Liberation Sans';transform:scaleX(0.7500) skewX(-6deg);transform-origin:0 100%;">46</div>
<div class="g" style="left:144.26px;top:545px;font:italic 11px 'Liberation Sans';transform:scaleX(0.6850) skewX(-6deg);transform-origin:0 100%;">Б2–3</div>
<div class="g" style="left:258.0px;top:545px;font:italic 11px 'Liberation Sans';transform:scaleX(0.6850) skewX(-6deg);transform-origin:0 100%;">Балка</div>
<div class="g" style="left:359.55px;top:545px;font:italic 11px 'Liberation Sans';transform:scaleX(0.8000) skewX(-6deg);transform-origin:0 100%;">1</div>
<div class="g" style="left:400.88px;top:545px;font:italic 11px 'Liberation Sans';transform:scaleX(0.7800) skewX(-6deg);transform-origin:0 100%;">1806.8</div>
<div class="g" style="left:443.18px;top:545px;font:italic 11px 'Liberation Sans';transform:scaleX(0.7800) skewX(-6deg);transform-origin:0 100%;">1806.8</div>
<div class="g" style="left:71.41px;top:558px;font:italic 11px 'Liberation Sans';transform:scaleX(0.7500) skewX(-6deg);transform-origin:0 100%;">47</div>
<div class="g" style="left:144.26px;top:558px;font:italic 11px 'Liberation Sans';transform:scaleX(0.6850) skewX(-6deg);transform-origin:0 100%;">Б2–4</div>
<div class="g" style="left:258.0px;top:558px;font:italic 11px 'Liberation Sans';transform:scaleX(0.6850) skewX(-6deg);transform-origin:0 100%;">Балка</div>
<div class="g" style="left:359.55px;top:558px;font:italic 11px 'Liberation Sans';transform:scaleX(0.8000) skewX(-6deg);transform-origin:0 100%;">1</div>
<div class="g" style="left:400.88px;top:558px;font:italic 11px 'Liberation Sans';transform:scaleX(0.7800) skewX(-6deg);transform-origin:0 100%;">1788.0</div>
<div class="g" style="left:443.18px;top:558px;font:italic 11px 'Liberation Sans';transform:scaleX(0.7800) skewX(-6deg);transform-origin:0 100%;">1788.0</div>
<div class="g" style="left:71.41px;top:572px;font:italic 11px 'Liberation Sans';transform:scaleX(0.7500) skewX(-6deg);transform-origin:0 100%;">48</div>
<div class="g" style="left:144.26px;top:572px;font:italic 11px 'Liberation Sans';transform:scaleX(0.6850) skewX(-6deg);transform-origin:0 100%;">Б2–5</div>
<div class="g" style="left:258.0px;top:572px;font:italic 11px 'Liberation Sans';transform:scaleX(0.6850) skewX(-6deg);transform-origin:0 100%;">Балка</div>
<div class="g" style="left:359.55px;top:572px;font:italic 11px 'Liberation Sans';transform:scaleX(0.8000) skewX(-6deg);transform-origin:0 100%;">1</div>
<div class="g" style="left:400.88px;top:572px;font:italic 11px 'Liberation Sans';transform:scaleX(0.7800) skewX(-6deg);transform-origin:0 100%;">1786.9</div>
<div class="g" style="left:443.18px;top:572px;font:italic 11px 'Liberation Sans';transform:scaleX(0.7800) skewX(-6deg);transform-origin:0 100%;">1786.9</div>
<div class="g" style="left:71.41px;top:585px;font:italic 11px 'Liberation Sans';transform:scaleX(0.7500) skewX(-6deg);transform-origin:0 100%;">49</div>
<div class="g" style="left:144.26px;top:585px;font:italic 11px 'Liberation Sans';transform:scaleX(0.6850) skewX(-6deg);transform-origin:0 100%;">Б2–6</div>
<div class="g" style="left:258.0px;top:585px;font:italic 11px 'Liberation Sans';transform:scaleX(0.6850) skewX(-6deg);transform-origin:0 100%;">Балка</div>
<div class="g" style="left:359.55px;top:585px;font:italic 11px 'Liberation Sans';transform:scaleX(0.8000) skewX(-6deg);transform-origin:0 100%;">1</div>
<div class="g" style="left:400.88px;top:585px;font:italic 11px 'Liberation Sans';transform:scaleX(0.7800) skewX(-6deg);transform-origin:0 100%;">1825.8</div>
<div class="g" style="left:443.18px;top:585px;font:italic 11px 'Liberation Sans';transform:scaleX(0.7800) skewX(-6deg);transform-origin:0 100%;">1825.8</div>
<div class="g" style="left:71.41px;top:599px;font:italic 11px 'Liberation Sans';transform:scaleX(0.7500) skewX(-6deg);transform-origin:0 100%;">50</div>
<div class="g" style="left:144.26px;top:599px;font:italic 11px 'Liberation Sans';transform:scaleX(0.6850) skewX(-6deg);transform-origin:0 100%;">Б2–7</div>
<div class="g" style="left:258.0px;top:599px;font:italic 11px 'Liberation Sans';transform:scaleX(0.6850) skewX(-6deg);transform-origin:0 100%;">Балка</div>
<div class="g" style="left:359.55px;top:599px;font:italic 11px 'Liberation Sans';transform:scaleX(0.8000) skewX(-6deg);transform-origin:0 100%;">1</div>
<div class="g" style="left:400.88px;top:599px;font:italic 11px 'Liberation Sans';transform:scaleX(0.7800) skewX(-6deg);transform-origin:0 100%;">1564.1</div>
<div class="g" style="left:443.18px;top:599px;font:italic 11px 'Liberation Sans';transform:scaleX(0.7800) skewX(-6deg);transform-origin:0 100%;">1564.1</div>
<div class="a" style="left:501px;top:36px;width:502px;height:683px;background:#fff;border:1px solid #2b88d8;box-shadow:0 2px 14px rgba(0,0,0,0.30)"></div>
<div class="a" style="left:501px;top:36px;width:502px;height:31px;background:#0078d7;"></div>
<svg class="a" style="left:506px;top:40px" width="24" height="20" viewBox="0 0 24 20"><path d="M11.6 5 L19.8 5 L19 8.5 L16 8.5 C13.6 8.5 12 9.6 12 11 L12 12.2 C12 13.3 12.8 13.9 13.8 13.9 L18.8 13.9 L17.4 16.4 L11.2 16.4 C9.7 16.4 8.8 15.2 8.8 13.6 L8.8 9.2 C8.8 7 9.8 5.4 11.6 5 Z" fill="#f04800"/><rect x="15.2" y="10.2" width="2.8" height="1.6" fill="#f04800"/><path d="M4.6 15 Q4.9 9.6 9.4 6.6" fill="none" stroke="#f04800" stroke-width="1.4" stroke-dasharray="1.3 0.6" opacity="0.8"/><path d="M6.6 15 Q6.8 11 9.3 8.4" fill="none" stroke="#f04800" stroke-width="1.2" stroke-dasharray="1 0.8" opacity="0.7"/></svg>
<div class="t" style="left:532px;top:45.2px;font:12px 'Liberation Sans';transform:scaleX(0.9727);transform-origin:0 100%;color:#fff">WeldApp — Набор плагинов для Tekla Structures 2016</div>
<div class="a" style="left:883px;top:51px;width:10px;height:1px;background:#fff;"></div>
<div class="a" style="left:928px;top:46px;width:10px;height:10px;background:transparent;border:1px solid #fff;"></div>
<svg class="a" style="left:974px;top:46px" width="11" height="11" viewBox="0 0 11 11"><path d="M0.3 0.3 L10.7 10.7 M10.7 0.3 L0.3 10.7" stroke="#fff" stroke-width="1.1"/></svg>
<div class="a" style="left:504px;top:69px;width:119px;height:22px;background:#f0f0f0;border:1px solid #d9d9d9;"></div>
<div class="a" style="left:622px;top:69px;width:43px;height:22px;background:#f0f0f0;border:1px solid #d9d9d9;"></div>
<div class="a" style="left:664px;top:69px;width:76px;height:22px;background:#f0f0f0;border:1px solid #d9d9d9;"></div>
<div class="t" style="left:510px;top:74px;font:12px 'Liberation Sans';transform:scaleX(0.9128);transform-origin:0 100%;">Нумератор чертежей</div>
<div class="t" style="left:629px;top:74px;font:12px 'Liberation Sans';transform:scaleX(0.8746);transform-origin:0 100%;">SQL</div>
<svg class="a" style="left:671px;top:76px" width="16" height="9" viewBox="0 0 16 9" shape-rendering="crispEdges"><rect width="16" height="9" fill="#fb5a1e"/><g fill="#fff"><rect x="1" y="2" width="1" height="5"/><rect x="4" y="2" width="1" height="5"/><rect x="2" y="3" width="1" height="2"/><rect x="3" y="4" width="1" height="2"/><rect x="6" y="2" width="1" height="5"/><rect x="6" y="2" width="3" height="1"/><rect x="6" y="4" width="3" height="1"/><rect x="6" y="6" width="3" height="1"/><rect x="10" y="2" width="1" height="5"/><rect x="14" y="2" width="1" height="5"/><rect x="12" y="3" width="1" height="3"/><rect x="11" y="6" width="1" height="1"/><rect x="13" y="6" width="1" height="1"/></g></svg>
<div class="t" style="left:693px;top:74px;font:12px 'Liberation Sans';transform:scaleX(0.9200);transform-origin:0 100%;">Оценить</div>
<div class="a" style="left:504px;top:90px;width:48px;height:22px;background:#f0f0f0;border:1px solid #d9d9d9;"></div>
<div class="a" style="left:693px;top:90px;width:121px;height:22px;background:#f0f0f0;border:1px solid #d9d9d9;"></div>
<div class="a" style="left:813px;top:90px;width:103px;height:22px;background:#f0f0f0;border:1px solid #d9d9d9;"></div>
<div class="a" style="left:915px;top:90px;width:82px;height:22px;background:#f0f0f0;border:1px solid #d9d9d9;"></div>
<div class="t" style="left:509px;top:95px;font:12px 'Liberation Sans';transform:scaleX(0.9396);transform-origin:0 100%;">Сварка</div>
<div class="t" style="left:698px;top:95px;font:12px 'Liberation Sans';transform:scaleX(0.9182);transform-origin:0 100%;">Инструменты модели</div>
<div class="t" style="left:820px;top:95px;font:12px 'Liberation Sans';transform:scaleX(0.9091);transform-origin:0 100%;">Плагины чертежа</div>
<div class="t" style="left:921px;top:95px;font:12px 'Liberation Sans';transform:scaleX(0.9313);transform-origin:0 100%;">Узлы Xplugins</div>
<div class="a" style="left:502px;top:111px;width:498px;height:536px;background:#fff;border:1px solid #d9d9d9;border-left:none"></div>
<div class="a" style="left:551px;top:88px;width:143px;height:25px;background:#fff;border:1px solid #d9d9d9;border-bottom:none"></div>
<div class="t" style="left:559px;top:92.5px;font:12px 'Liberation Sans';transform:scaleX(0.9457);transform-origin:0 100%;">Вставка текста/таблицы</div>
<div class="a" style="left:506px;top:117px;width:281px;height:21px;background:#fff;border:1px solid #cccccc;"></div>
<div class="a" style="left:509px;top:120px;width:259px;height:15px;background:#f0f0f0;"></div>
<div class="t" style="left:509px;top:119.5px;font:12px 'Liberation Sans';transform:scaleX(0.9122);transform-origin:0 100%;color:#838383">*Из буфера обмена*</div>
<svg class="a" style="left:773px;top:126px" width="10" height="6" viewBox="0 0 10 6"><path d="M0.6 0.6 L4.8 4.8 L9 0.6" fill="none" stroke="#bfbfbf" stroke-width="1.05"/></svg>
<div class="a" style="left:791px;top:117px;width:113px;height:21px;background:#cccccc;"></div>
<div class="t" style="left:819px;top:120.5px;font:12px 'Liberation Sans';transform:scaleX(0.9056);transform-origin:0 100%;color:#838383">Сохранить</div>
<div class="a" style="left:906px;top:117px;width:90px;height:21px;background:#cccccc;"></div>
<div class="t" style="left:911px;top:120.5px;font:12px 'Liberation Sans';transform:scaleX(0.9569);transform-origin:0 100%;color:#838383">Открыть папку</div>
<div class="a" style="left:506px;top:141px;width:207px;height:21px;background:#fff;border:1px solid #7a7a7a;"></div>
<div class="t" style="left:509px;top:143.5px;font:12px 'Liberation Sans';transform:scaleX(0.8976);transform-origin:0 100%;">GOST 2.304 type A</div>
<svg class="a" style="left:699.5px;top:149px" width="10" height="6" viewBox="0 0 10 6"><path d="M0.6 0.6 L4.8 4.8 L9 0.6" fill="none" stroke="#333" stroke-width="1.05"/></svg>
<div class="a" style="left:716px;top:141px;width:71px;height:21px;background:#fff;border:1px solid #7a7a7a;"></div>
<div class="a" style="left:721px;top:149px;width:46px;height:4px;background:#000;"></div>
<svg class="a" style="left:773px;top:149px" width="10" height="6" viewBox="0 0 10 6"><path d="M0.6 0.6 L4.8 4.8 L9 0.6" fill="none" stroke="#333" stroke-width="1.05"/></svg>
<div class="a" style="left:506px;top:161px;width:281px;height:24px;background:transparent;border:1px solid #dadada;border-top:none"></div>
<div class="t" style="left:577px;top:167px;font:12px 'Liberation Sans';transform:scaleX(0.9065);transform-origin:0 100%;">Цвет линий:</div>
<div class="a" style="left:642px;top:164px;width:71px;height:21px;background:#fff;border:1px solid #7a7a7a;"></div>
<div class="a" style="left:647px;top:172px;width:45px;height:4px;background:#0000ff;"></div>
<svg class="a" style="left:699.5px;top:172.5px" width="10" height="6" viewBox="0 0 10 6"><path d="M0.6 0.6 L4.8 4.8 L9 0.6" fill="none" stroke="#333" stroke-width="1.05"/></svg>
<div class="a" style="left:716px;top:164px;width:34px;height:21px;background:#e1e1e1;border:1px solid #adadad;"></div>
<div class="t" style="left:716px;top:167px;width:34px;text-align:center;font:bold 14px/16px 'Liberation Serif',serif">B</div>
<div class="a" style="left:753px;top:164px;width:34px;height:21px;background:#e1e1e1;border:1px solid #adadad;"></div>
<div class="t" style="left:753px;top:167px;width:34px;text-align:center;font:italic 15px/16px 'Liberation Serif',serif">I</div>
<div class="a" style="left:790px;top:141px;width:206px;height:44px;background:transparent;border:1px solid #dadada;"></div>
<div class="a" style="left:796px;top:147px;width:13px;height:13px;background:#fff;border:1px solid #cccccc;"></div>
<svg class="a" style="left:797px;top:149px" width="11" height="9" viewBox="0 0 11 9"><path d="M1 4.5 L4 7.5 L10 1" fill="none" stroke="#bfbfbf" stroke-width="1.2"/></svg>
<div class="t" style="left:814.3px;top:146.5px;font:12px 'Liberation Sans';transform:scaleX(0.9089);transform-origin:0 100%;color:#6d6d6d">Сохранять в папку приложения</div>
<div class="a" style="left:796px;top:166px;width:13px;height:13px;background:#fff;border:1px solid #cccccc;"></div>
<div class="t" style="left:814.3px;top:165.5px;font:12px 'Liberation Sans';transform:scaleX(0.9091);transform-origin:0 100%;color:#6d6d6d">Сохранять в папку модели</div>
<div class="a" style="left:508px;top:190px;width:220px;height:19px;background:#f0f0f0;border:1px solid #d9d9d9;"></div>
<div class="t" style="left:580px;top:192px;font:12px 'Liberation Sans';transform:scaleX(0.9354);transform-origin:0 100%;">Вставка текста</div>
<div class="a" style="left:506px;top:208px;width:489px;height:380px;background:#fff;border:1px solid #d9d9d9;"></div>
<div class="a" style="left:727px;top:188px;width:234px;height:22px;background:#fff;border:1px solid #d9d9d9;border-bottom:none"></div>
<div class="t" style="left:800px;top:190.5px;font:12px 'Liberation Sans';transform:scaleX(0.9214);transform-origin:0 100%;">Вставка таблицы</div>
<div class="a" style="left:510px;top:210px;width:466px;height:333px;overflow:hidden;background:#fff"><div class="a" style="left:-510px;top:-210px;width:1040px;height:751px"><div class="a" style="left:520px;top:225px;width:521px;height:1px;background:#000;"></div>
<div class="a" style="left:948px;top:243px;width:93px;height:1px;background:#000;"></div>
<div class="a" style="left:520px;top:261px;width:521px;height:1px;background:#000;"></div>
<div class="a" style="left:520px;top:279px;width:521px;height:1px;background:#000;"></div>
<div class="a" style="left:520px;top:297px;width:521px;height:1px;background:#000;"></div>
<div class="a" style="left:520px;top:315px;width:521px;height:1px;background:#000;"></div>
<div class="a" style="left:520px;top:333px;width:521px;height:1px;background:#000;"></div>
<div class="a" style="left:520px;top:351px;width:521px;height:1px;background:#000;"></div>
<div class="a" style="left:520px;top:369px;width:521px;height:1px;background:#000;"></div>
<div class="a" style="left:520px;top:387px;width:521px;height:1px;background:#000;"></div>
<div class="a" style="left:520px;top:405px;width:521px;height:1px;background:#000;"></div>
<div class="a" style="left:520px;top:423px;width:521px;height:1px;background:#000;"></div>
<div class="a" style="left:520px;top:441px;width:521px;height:1px;background:#000;"></div>
<div class="a" style="left:520px;top:459px;width:521px;height:1px;background:#000;"></div>
<div class="a" style="left:520px;top:477px;width:521px;height:1px;background:#000;"></div>
<div class="a" style="left:520px;top:495px;width:521px;height:1px;background:#000;"></div>
<div class="a" style="left:520px;top:513px;width:521px;height:1px;background:#000;"></div>
<div class="a" style="left:520px;top:531px;width:521px;height:1px;background:#000;"></div>
<div class="a" style="left:520px;top:549px;width:521px;height:1px;background:#000;"></div>
<div class="a" style="left:520px;top:567px;width:521px;height:1px;background:#000;"></div>
<div class="a" style="left:520px;top:585px;width:521px;height:1px;background:#000;"></div>
<div class="a" style="left:520px;top:603px;width:521px;height:1px;background:#000;"></div>
<div class="a" style="left:520px;top:225px;width:1px;height:396px;background:#000;"></div>
<div class="a" style="left:575px;top:225px;width:1px;height:396px;background:#000;"></div>
<div class="a" style="left:713px;top:225px;width:1px;height:396px;background:#000;"></div>
<div class="a" style="left:861px;top:225px;width:1px;height:396px;background:#000;"></div>
<div class="a" style="left:948px;top:225px;width:1px;height:396px;background:#000;"></div>
<div class="w" style="left:532.26px;top:228.5px;font:bold 14px 'Liberation Sans';transform:scaleX(0.9520);transform-origin:0 100%;">Лист</div>
<div class="w" style="left:540.57px;top:244.5px;font:bold 14px 'Liberation Sans';transform:scaleX(0.9520);transform-origin:0 100%;">№</div>
<div class="w" style="left:600.85px;top:228.5px;font:bold 14px 'Liberation Sans';transform:scaleX(0.9520);transform-origin:0 100%;">Отправочная</div>
<div class="w" style="left:624.84px;top:244.5px;font:bold 14px 'Liberation Sans';transform:scaleX(0.9520);transform-origin:0 100%;">марка</div>
<div class="w" style="left:738.61px;top:228.5px;font:bold 14px 'Liberation Sans';transform:scaleX(0.9520);transform-origin:0 100%;">Наименование</div>
<div class="w" style="left:767.45px;top:244.5px;font:bold 14px 'Liberation Sans';transform:scaleX(0.9520);transform-origin:0 100%;">марки</div>
<div class="w" style="left:866.16px;top:244.5px;font:bold 14px 'Liberation Sans';transform:scaleX(0.9520);transform-origin:0 100%;">Количество</div>
<div class="w" style="left:971px;top:226.5px;font:bold 14px 'Liberation Sans';transform:scaleX(0.9520);transform-origin:0 100%;">Масса, кг</div>
<div class="w" style="left:955px;top:244.5px;font:bold 14px 'Liberation Sans';transform:scaleX(0.9520);transform-origin:0 100%;">1 дет.</div>
<div class="w" style="left:540.59px;top:262.5px;font:14px 'Liberation Sans';transform:scaleX(0.9520);transform-origin:0 100%;color:#0000ff">10</div>
<div class="w" style="left:630.5px;top:262.5px;font:14px 'Liberation Sans';transform:scaleX(0.9520);transform-origin:0 100%;color:#0000ff">Б1-1</div>
<div class="w" style="left:768.76px;top:262.5px;font:14px 'Liberation Sans';transform:scaleX(0.9520);transform-origin:0 100%;color:#0000ff">Балка</div>
<div class="w" style="left:901.99px;top:262.5px;font:14px 'Liberation Sans';transform:scaleX(0.9520);transform-origin:0 100%;color:#0000ff">1</div>
<div class="w" style="left:954.8px;top:262.5px;font:14px 'Liberation Sans';transform:scaleX(0.9520);transform-origin:0 100%;color:#0000ff">1807.0</div>
<div class="w" style="left:541.08px;top:280.5px;font:14px 'Liberation Sans';transform:scaleX(0.9520);transform-origin:0 100%;color:#0000ff">11</div>
<div class="w" style="left:630.5px;top:280.5px;font:14px 'Liberation Sans';transform:scaleX(0.9520);transform-origin:0 100%;color:#0000ff">Б1-2</div>
<div class="w" style="left:768.76px;top:280.5px;font:14px 'Liberation Sans';transform:scaleX(0.9520);transform-origin:0 100%;color:#0000ff">Балка</div>
<div class="w" style="left:901.99px;top:280.5px;font:14px 'Liberation Sans';transform:scaleX(0.9520);transform-origin:0 100%;color:#0000ff">1</div>
<div class="w" style="left:954.8px;top:280.5px;font:14px 'Liberation Sans';transform:scaleX(0.9520);transform-origin:0 100%;color:#0000ff">1766.5</div>
<div class="w" style="left:540.59px;top:298.5px;font:14px 'Liberation Sans';transform:scaleX(0.9520);transform-origin:0 100%;color:#0000ff">12</div>
<div class="w" style="left:630.5px;top:298.5px;font:14px 'Liberation Sans';transform:scaleX(0.9520);transform-origin:0 100%;color:#0000ff">Б1-3</div>
<div class="w" style="left:768.76px;top:298.5px;font:14px 'Liberation Sans';transform:scaleX(0.9520);transform-origin:0 100%;color:#0000ff">Балка</div>
<div class="w" style="left:901.99px;top:298.5px;font:14px 'Liberation Sans';transform:scaleX(0.9520);transform-origin:0 100%;color:#0000ff">1</div>
<div class="w" style="left:954.8px;top:298.5px;font:14px 'Liberation Sans';transform:scaleX(0.9520);transform-origin:0 100%;color:#0000ff">1737.0</div>
<div class="w" style="left:540.59px;top:316.5px;font:14px 'Liberation Sans';transform:scaleX(0.9520);transform-origin:0 100%;color:#0000ff">13</div>
<div class="w" style="left:630.5px;top:316.5px;font:14px 'Liberation Sans';transform:scaleX(0.9520);transform-origin:0 100%;color:#0000ff">Б1-4</div>
<div class="w" style="left:768.76px;top:316.5px;font:14px 'Liberation Sans';transform:scaleX(0.9520);transform-origin:0 100%;color:#0000ff">Балка</div>
<div class="w" style="left:901.99px;top:316.5px;font:14px 'Liberation Sans';transform:scaleX(0.9520);transform-origin:0 100%;color:#0000ff">1</div>
<div class="w" style="left:954.8px;top:316.5px;font:14px 'Liberation Sans';transform:scaleX(0.9520);transform-origin:0 100%;color:#0000ff">1766.9</div>
<div class="w" style="left:540.59px;top:334.5px;font:14px 'Liberation Sans';transform:scaleX(0.9520);transform-origin:0 100%;color:#0000ff">14</div>
<div class="w" style="left:630.5px;top:334.5px;font:14px 'Liberation Sans';transform:scaleX(0.9520);transform-origin:0 100%;color:#0000ff">Б1-5</div>
<div class="w" style="left:768.76px;top:334.5px;font:14px 'Liberation Sans';transform:scaleX(0.9520);transform-origin:0 100%;color:#0000ff">Балка</div>
<div class="w" style="left:901.99px;top:334.5px;font:14px 'Liberation Sans';transform:scaleX(0.9520);transform-origin:0 100%;color:#0000ff">1</div>
<div class="w" style="left:954.8px;top:334.5px;font:14px 'Liberation Sans';transform:scaleX(0.9520);transform-origin:0 100%;color:#0000ff">1775.5</div>
<div class="w" style="left:540.59px;top:352.5px;font:14px 'Liberation Sans';transform:scaleX(0.9520);transform-origin:0 100%;color:#0000ff">15</div>
<div class="w" style="left:630.5px;top:352.5px;font:14px 'Liberation Sans';transform:scaleX(0.9520);transform-origin:0 100%;color:#0000ff">Б1-6</div>
<div class="w" style="left:768.76px;top:352.5px;font:14px 'Liberation Sans';transform:scaleX(0.9520);transform-origin:0 100%;color:#0000ff">Балка</div>
<div class="w" style="left:901.99px;top:352.5px;font:14px 'Liberation Sans';transform:scaleX(0.9520);transform-origin:0 100%;color:#0000ff">3</div>
<div class="w" style="left:954.8px;top:352.5px;font:14px 'Liberation Sans';transform:scaleX(0.9520);transform-origin:0 100%;color:#0000ff">1776.1</div>
<div class="w" style="left:540.59px;top:370.5px;font:14px 'Liberation Sans';transform:scaleX(0.9520);transform-origin:0 100%;color:#0000ff">16</div>
<div class="w" style="left:630.5px;top:370.5px;font:14px 'Liberation Sans';transform:scaleX(0.9520);transform-origin:0 100%;color:#0000ff">Б1-7</div>
<div class="w" style="left:768.76px;top:370.5px;font:14px 'Liberation Sans';transform:scaleX(0.9520);transform-origin:0 100%;color:#0000ff">Балка</div>
<div class="w" style="left:901.99px;top:370.5px;font:14px 'Liberation Sans';transform:scaleX(0.9520);transform-origin:0 100%;color:#0000ff">1</div>
<div class="w" style="left:954.8px;top:370.5px;font:14px 'Liberation Sans';transform:scaleX(0.9520);transform-origin:0 100%;color:#0000ff">1839.6</div>
<div class="w" style="left:540.59px;top:388.5px;font:14px 'Liberation Sans';transform:scaleX(0.9520);transform-origin:0 100%;color:#0000ff">17</div>
<div class="w" style="left:630.5px;top:388.5px;font:14px 'Liberation Sans';transform:scaleX(0.9520);transform-origin:0 100%;color:#0000ff">Б1-8</div>
<div class="w" style="left:768.76px;top:388.5px;font:14px 'Liberation Sans';transform:scaleX(0.9520);transform-origin:0 100%;color:#0000ff">Балка</div>
<div class="w" style="left:901.99px;top:388.5px;font:14px 'Liberation Sans';transform:scaleX(0.9520);transform-origin:0 100%;color:#0000ff">3</div>
<div class="w" style="left:954.8px;top:388.5px;font:14px 'Liberation Sans';transform:scaleX(0.9520);transform-origin:0 100%;color:#0000ff">1780.3</div>
<div class="w" style="left:540.59px;top:406.5px;font:14px 'Liberation Sans';transform:scaleX(0.9520);transform-origin:0 100%;color:#0000ff">18</div>
<div class="w" style="left:630.5px;top:406.5px;font:14px 'Liberation Sans';transform:scaleX(0.9520);transform-origin:0 100%;color:#0000ff">Б1-9</div>
<div class="w" style="left:768.76px;top:406.5px;font:14px 'Liberation Sans';transform:scaleX(0.9520);transform-origin:0 100%;color:#0000ff">Балка</div>
<div class="w" style="left:901.99px;top:406.5px;font:14px 'Liberation Sans';transform:scaleX(0.9520);transform-origin:0 100%;color:#0000ff">1</div>
<div class="w" style="left:954.8px;top:406.5px;font:14px 'Liberation Sans';transform:scaleX(0.9520);transform-origin:0 100%;color:#0000ff">1820.7</div>
<div class="w" style="left:540.59px;top:424.5px;font:14px 'Liberation Sans';transform:scaleX(0.9520);transform-origin:0 100%;color:#0000ff">19</div>
<div class="w" style="left:626.79px;top:424.5px;font:14px 'Liberation Sans';transform:scaleX(0.9520);transform-origin:0 100%;color:#0000ff">Б1-10</div>
<div class="w" style="left:768.76px;top:424.5px;font:14px 'Liberation Sans';transform:scaleX(0.9520);transform-origin:0 100%;color:#0000ff">Балка</div>
<div class="w" style="left:901.99px;top:424.5px;font:14px 'Liberation Sans';transform:scaleX(0.9520);transform-origin:0 100%;color:#0000ff">1</div>
<div class="w" style="left:954.8px;top:424.5px;font:14px 'Liberation Sans';transform:scaleX(0.9520);transform-origin:0 100%;color:#0000ff">1741.8</div>
<div class="w" style="left:540.59px;top:442.5px;font:14px 'Liberation Sans';transform:scaleX(0.9520);transform-origin:0 100%;color:#0000ff">20</div>
<div class="w" style="left:627.28px;top:442.5px;font:14px 'Liberation Sans';transform:scaleX(0.9520);transform-origin:0 100%;color:#0000ff">Б1-11</div>
<div class="w" style="left:768.76px;top:442.5px;font:14px 'Liberation Sans';transform:scaleX(0.9520);transform-origin:0 100%;color:#0000ff">Балка</div>
<div class="w" style="left:901.99px;top:442.5px;font:14px 'Liberation Sans';transform:scaleX(0.9520);transform-origin:0 100%;color:#0000ff">1</div>
<div class="w" style="left:954.8px;top:442.5px;font:14px 'Liberation Sans';transform:scaleX(0.9520);transform-origin:0 100%;color:#0000ff">1856.8</div>
<div class="w" style="left:540.59px;top:460.5px;font:14px 'Liberation Sans';transform:scaleX(0.9520);transform-origin:0 100%;color:#0000ff">21</div>
<div class="w" style="left:626.79px;top:460.5px;font:14px 'Liberation Sans';transform:scaleX(0.9520);transform-origin:0 100%;color:#0000ff">Б1-12</div>
<div class="w" style="left:768.76px;top:460.5px;font:14px 'Liberation Sans';transform:scaleX(0.9520);transform-origin:0 100%;color:#0000ff">Балка</div>
<div class="w" style="left:901.99px;top:460.5px;font:14px 'Liberation Sans';transform:scaleX(0.9520);transform-origin:0 100%;color:#0000ff">1</div>
<div class="w" style="left:954.8px;top:460.5px;font:14px 'Liberation Sans';transform:scaleX(0.9520);transform-origin:0 100%;color:#0000ff">1590.0</div>
<div class="w" style="left:540.59px;top:478.5px;font:14px 'Liberation Sans';transform:scaleX(0.9520);transform-origin:0 100%;color:#0000ff">22</div>
<div class="w" style="left:626.79px;top:478.5px;font:14px 'Liberation Sans';transform:scaleX(0.9520);transform-origin:0 100%;color:#0000ff">Б1-13</div>
<div class="w" style="left:768.76px;top:478.5px;font:14px 'Liberation Sans';transform:scaleX(0.9520);transform-origin:0 100%;color:#0000ff">Балка</div>
<div class="w" style="left:901.99px;top:478.5px;font:14px 'Liberation Sans';transform:scaleX(0.9520);transform-origin:0 100%;color:#0000ff">1</div>
<div class="w" style="left:954.8px;top:478.5px;font:14px 'Liberation Sans';transform:scaleX(0.9520);transform-origin:0 100%;color:#0000ff">1559.4</div>
<div class="w" style="left:540.59px;top:496.5px;font:14px 'Liberation Sans';transform:scaleX(0.9520);transform-origin:0 100%;color:#0000ff">23</div>
<div class="w" style="left:626.79px;top:496.5px;font:14px 'Liberation Sans';transform:scaleX(0.9520);transform-origin:0 100%;color:#0000ff">Б1-14</div>
<div class="w" style="left:768.76px;top:496.5px;font:14px 'Liberation Sans';transform:scaleX(0.9520);transform-origin:0 100%;color:#0000ff">Балка</div>
<div class="w" style="left:901.99px;top:496.5px;font:14px 'Liberation Sans';transform:scaleX(0.9520);transform-origin:0 100%;color:#0000ff">1</div>
<div class="w" style="left:954.8px;top:496.5px;font:14px 'Liberation Sans';transform:scaleX(0.9520);transform-origin:0 100%;color:#0000ff">1523.9</div>
<div class="w" style="left:540.59px;top:514.5px;font:14px 'Liberation Sans';transform:scaleX(0.9520);transform-origin:0 100%;color:#0000ff">24</div>
<div class="w" style="left:626.79px;top:514.5px;font:14px 'Liberation Sans';transform:scaleX(0.9520);transform-origin:0 100%;color:#0000ff">Б1-15</div>
<div class="w" style="left:768.76px;top:514.5px;font:14px 'Liberation Sans';transform:scaleX(0.9520);transform-origin:0 100%;color:#0000ff">Балка</div>
<div class="w" style="left:901.99px;top:514.5px;font:14px 'Liberation Sans';transform:scaleX(0.9520);transform-origin:0 100%;color:#0000ff">1</div>
<div class="w" style="left:954.8px;top:514.5px;font:14px 'Liberation Sans';transform:scaleX(0.9520);transform-origin:0 100%;color:#0000ff">1564.8</div>
<div class="w" style="left:540.59px;top:532.5px;font:14px 'Liberation Sans';transform:scaleX(0.9520);transform-origin:0 100%;color:#0000ff">25</div>
<div class="w" style="left:626.79px;top:532.5px;font:14px 'Liberation Sans';transform:scaleX(0.9520);transform-origin:0 100%;color:#0000ff">Б1-16</div>
<div class="w" style="left:768.76px;top:532.5px;font:14px 'Liberation Sans';transform:scaleX(0.9520);transform-origin:0 100%;color:#0000ff">Балка</div>
<div class="w" style="left:901.99px;top:532.5px;font:14px 'Liberation Sans';transform:scaleX(0.9520);transform-origin:0 100%;color:#0000ff">1</div>
<div class="w" style="left:954.8px;top:532.5px;font:14px 'Liberation Sans';transform:scaleX(0.9520);transform-origin:0 100%;color:#0000ff">1562.1</div>
<div class="w" style="left:540.59px;top:550.5px;font:14px 'Liberation Sans';transform:scaleX(0.9520);transform-origin:0 100%;color:#0000ff">26</div>
<div class="w" style="left:626.79px;top:550.5px;font:14px 'Liberation Sans';transform:scaleX(0.9520);transform-origin:0 100%;color:#0000ff">Б1-17</div>
<div class="w" style="left:768.76px;top:550.5px;font:14px 'Liberation Sans';transform:scaleX(0.9520);transform-origin:0 100%;color:#0000ff">Балка</div>
<div class="w" style="left:901.99px;top:550.5px;font:14px 'Liberation Sans';transform:scaleX(0.9520);transform-origin:0 100%;color:#0000ff">1</div>
<div class="w" style="left:954.8px;top:550.5px;font:14px 'Liberation Sans';transform:scaleX(0.9520);transform-origin:0 100%;color:#0000ff">1590.0</div></div></div>
<div class="a" style="left:976px;top:210px;width:17px;height:350px;background:#f0f0f0;"></div>
<div class="a" style="left:977px;top:244px;width:15px;height:108px;background:#cdcdcd;"></div>
<svg class="a" style="left:978px;top:226px" width="14" height="11" viewBox="978 226 14 11"><polygon points="979,232.3 984.4,227 990,232.3 990,235.8 984.4,230.6 979,235.8" fill="#606060"/></svg>
<svg class="a" style="left:978px;top:516px" width="14" height="11" viewBox="978 516 14 11"><polygon points="979,517 984.4,522.2 990,517 990,520.6 984.4,525.8 979,520.6" fill="#606060"/></svg>
<div class="a" style="left:510px;top:543px;width:467px;height:17px;background:#f0f0f0;"></div>
<div class="a" style="left:544px;top:544px;width:331px;height:15px;background:#cdcdcd;"></div>
<svg class="a" style="left:525px;top:545px" width="13" height="13" viewBox="525 545 13 13"><polygon points="526.9,551.5 531.6,546.1 536.1,546.1 531.4,551.5 536.1,556.9 531.6,556.9" fill="#606060"/></svg>
<svg class="a" style="left:948px;top:545px" width="12" height="13" viewBox="948 545 12 13"><polygon points="958.9,551.5 954.2,546.1 949.7,546.1 954.4,551.5 949.7,556.9 954.2,556.9" fill="#606060"/></svg>
<div class="a" style="left:511px;top:561px;width:482px;height:24px;background:#e1e1e1;border:1px solid #adadad;"></div>
<div class="t" style="left:639px;top:566px;font:12px 'Liberation Sans';transform:scaleX(0.9008);transform-origin:0 100%;">Считать данные таблицы из буфера обмена</div>
<div class="a" style="left:521px;top:599px;width:460px;height:8px;background:transparent;border:1px solid #dcdcdc;border-bottom:none"></div>
<div class="a" style="left:703px;top:595px;width:95px;height:10px;background:#fff;"></div>
<div class="t" style="left:706px;top:592px;font:12px 'Liberation Sans';transform:scaleX(0.9214);transform-origin:0 100%;color:#6d6d6d">Вставка таблицы</div>
<div class="a" style="left:507px;top:609px;width:122px;height:33px;background:#e1e1e1;border:1px solid #adadad;"></div>
<div class="t" style="left:541px;top:611.5px;font:12px 'Liberation Sans';transform:scaleX(0.9219);transform-origin:0 100%;">−1 точка−</div>
<div class="t" style="left:526px;top:624.5px;font:12px 'Liberation Sans';transform:scaleX(0.9191);transform-origin:0 100%;">(Только начало)</div>
<div class="a" style="left:632px;top:609px;width:363px;height:33px;background:#e1e1e1;border:1px solid #0078d7;border-width:2px"></div>
<div class="t" style="left:785px;top:612px;font:12px 'Liberation Sans';transform:scaleX(0.9231);transform-origin:0 100%;">− 2 точки −</div>
<div class="t" style="left:701px;top:625px;font:12px 'Liberation Sans';transform:scaleX(0.9217);transform-origin:0 100%;">(С указанием ширины или высоты колонки)</div>
<div class="a" style="left:502px;top:648px;width:500px;height:6px;background:#08a928;"></div>
<div class="a" style="left:502px;top:654px;width:500px;height:64px;background:#111836;"></div>
<div class="t" style="left:506.5px;top:661px;font:11px 'Liberation Sans';transform:scaleX(1.0069);transform-origin:0 100%;color:#dcdfe6">Разработка: АР, КМ, КЖ, КМД, ППР Ген. проектирование</div>
<div class="t" style="left:506.5px;top:675px;font:11px 'Liberation Sans';transform:scaleX(1.0129);transform-origin:0 100%;color:#dcdfe6">Изготовление и монтаж металлоконструкций</div>
<div class="t" style="left:506.5px;top:689px;font:11px 'Liberation Sans';transform:scaleX(0.9646);transform-origin:0 100%;color:#dcdfe6">Обучение: Tekla Structures, Robot Structural Analysis</div>
<div class="t" style="left:506.5px;top:703px;font:11px 'Liberation Sans';transform:scaleX(0.9768);transform-origin:0 100%;color:#dcdfe6">Купить: Tekla Structures, Среду Topengineer, Техтран, Xplugins</div>
<div class="a" style="left:825px;top:667px;width:114px;height:4px;background:#e6e6e6;"></div>
<svg class="a" style="left:938px;top:661px" width="11" height="19" viewBox="0 0 11 19"><path d="M0 0 H11 V14 L5.5 19 L0 14 Z" fill="#0078d7"/></svg>
<div class="a" style="left:952px;top:659px;width:46px;height:20px;background:#000;"></div>
<div class="a" style="left:954px;top:661px;width:20px;height:5px;background:#ececec;"></div>
<div class="a" style="left:954px;top:666px;width:20px;height:6px;background:#0d86ef;"></div>
<div class="a" style="left:954px;top:672px;width:20px;height:6px;background:#ff5424;"></div>
<svg class="a" style="left:975px;top:660px" width="22" height="18" viewBox="0 0 22 18"><rect width="22" height="18" fill="#1b87ee"/><path d="M0 0 L22 18 M22 0 L0 18" stroke="#fff" stroke-width="2.6"/><path d="M0 0 L22 18 M22 0 L0 18" stroke="#ff5a2a" stroke-width="1"/><path d="M11 0 V18 M0 9 H22" stroke="#fff" stroke-width="4.5"/><path d="M11 0 V18 M0 9 H22" stroke="#ff5a2a" stroke-width="3.2"/></svg>
<div class="t" style="left:879px;top:687px;font:11px 'Liberation Sans';transform:scaleX(1.0229);transform-origin:0 100%;color:#c8d2e6">Topengineer.ru / Форум</div>
<div class="t" style="left:847px;top:703px;font:11px 'Liberation Sans';transform:scaleX(0.9658);transform-origin:0 100%;color:#f0f0f0">8(495) 215-07-79 /</div>
<svg class="a" style="left:936px;top:704px" width="11" height="11" viewBox="0 0 11 11"><circle cx="5.5" cy="5.5" r="5.2" fill="#2ba6ee"/><path d="M7.3 3.4 C6.6 2.7 4.2 2.6 4 4 C3.8 5.4 7.4 5.2 7.2 7 C7 8.4 4.4 8.5 3.6 7.6" fill="none" stroke="#fff" stroke-width="1.3"/></svg>
<div class="t" style="left:949px;top:703px;font:11px 'Liberation Sans';transform:scaleX(0.9815);transform-origin:0 100%;color:#96cdf5">WildoMen</div>
</body></html>
